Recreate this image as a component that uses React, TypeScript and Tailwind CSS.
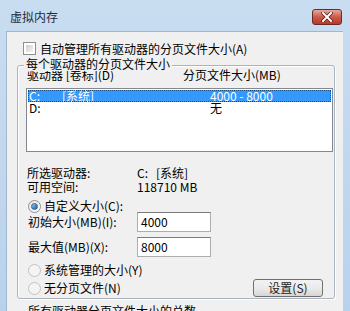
const FONT = "font-['Noto_Sans_CJK_SC','Noto_Sans',sans-serif]";

function CheckBox() {
    return (
        <span className="block w-[13px] h-[13px] border border-[#8f8f8f] bg-white p-[2px]">
            <span className="block w-full h-full bg-gradient-to-br from-[#cfcfcf] to-[#f4f4f4]" />
        </span>
    );
}

function Radio({ checked, dim }: { checked?: boolean; dim?: boolean }) {
    return (
        <span
            className={`flex items-center justify-center w-[13px] h-[13px] rounded-full border shrink-0 ${
                dim ? 'border-[#c2c2c2] bg-[#f4f4f4]' : 'border-[#8f8f8f] bg-gradient-to-br from-[#e6e6e6] to-white'
            }`}
        >
            {checked && (
                <span className="block w-[7px] h-[7px] rounded-full bg-gradient-to-br from-[#9fc8ec] to-[#1b5c9b] border border-[#2d5f8e]" />
            )}
        </span>
    );
}

function SizeRow({ label, value }: { label: string; value: string }) {
    return (
        <div className="flex items-center h-[20px]">
            <span className="w-[110px] pl-[1px] leading-[14px]">{label}</span>
            <div className="w-[74px] h-[20px] border border-[#abadb3] border-t-[#7a7a7a] bg-white pl-[3px] leading-[18px]">
                {value}
            </div>
        </div>
    );
}

export default function App() {
    return (
        <div className={`w-[350px] h-[311px] overflow-hidden bg-gradient-to-b from-[#c9ddf1] to-[#b9d2ec] text-[12px] text-black ${FONT}`}>
            {/* title bar */}
            <div className="flex items-center h-[31px]">
                <span className="pl-[10px] pt-[3px] leading-[14px] text-[#1e2b3a]">虚拟内存</span>
                <button className="ml-auto mr-[8px] mt-[3px] w-[30px] h-[16px] rounded-[3px] border border-[#6b2b25] bg-gradient-to-b from-[#e8a89c] via-[#c95a4c] to-[#b83a28] flex items-center justify-center">
                    <svg width="12" height="10" viewBox="0 0 12 10">
                        <path d="M2 1 L10 9 M10 1 L2 9" stroke="#5a1a14" strokeWidth="3.4" strokeLinecap="square" />
                        <path d="M2 1 L10 9 M10 1 L2 9" stroke="#ffffff" strokeWidth="2" strokeLinecap="square" />
                    </svg>
                </button>
            </div>

            {/* client area */}
            <div className="ml-[6px] w-[337px] h-[280px] bg-[#f0f0f0] border-l border-t border-[#a3b6ca]">
                <div className="flex items-center gap-[4px] ml-[16px] mt-[10px] h-[13px]">
                    <CheckBox />
                    <span className="leading-[14px]">自动管理所有驱动器的分页文件大小(A)</span>
                </div>

                {/* group box */}
                <div className="relative ml-[10px] mt-[10px] w-[318px] border border-[#aab4be] rounded-[3px] shadow-[inset_1px_1px_0_#ffffff,1px_1px_0_#ffffff] pl-[9px] pb-[1px]">
                    <span className="absolute left-[6px] -top-[9px] px-[2px] bg-[#f0f0f0] leading-[14px]">每个驱动器的分页文件大小</span>

                    <div className="flex mt-[3px] leading-[12px]">
                        <span className="w-[156px]">驱动器 [卷标](D)</span>
                        <span>分页文件大小(MB)</span>
                    </div>

                    <div className="ml-[-1px] mt-[7px] w-[307px] h-[64px] border border-[#828790] bg-white pt-[1px] px-[1px]">
                        <div className="flex h-[12px] leading-[12px] bg-[#3399ff] text-white outline-1 outline-dotted outline-[#1a4d80] outline-offset-[-1px]">
                            <span className="w-[34px] pl-[1px]">C:</span>
                            <span className="w-[148px]">[系统]</span>
                            <span>4000 - 8000</span>
                        </div>
                        <div className="flex h-[12px] leading-[12px]">
                            <span className="w-[182px] pl-[1px]">D:</span>
                            <span>无</span>
                        </div>
                    </div>

                    <div className="mt-[14px] leading-[14px]">
                        <div className="flex">
                            <span className="w-[110px]">所选驱动器:</span>
                            <span>C:&nbsp;&nbsp; [系统]</span>
                        </div>
                        <div className="flex">
                            <span className="w-[110px]">可用空间:</span>
                            <span>118710 MB</span>
                        </div>
                    </div>

                    <div className="flex items-center gap-[3px] mt-[6px] ml-[1px] h-[12px]">
                        <Radio checked />
                        <span className="leading-[14px]">自定义大小(C):</span>
                    </div>

                    <SizeRow label="初始大小(MB)(I):" value="4000" />
                    <div className="mt-[5px]">
                        <SizeRow label="最大值(MB)(X):" value="8000" />
                    </div>

                    <div className="flex items-center gap-[3px] mt-[6px] ml-[1px] h-[14px]">
                        <Radio dim />
                        <span className="leading-[14px]">系统管理的大小(Y)</span>
                    </div>

                    <div className="flex items-center mt-[2px] h-[18px]">
                        <div className="flex items-center gap-[3px] ml-[1px]">
                            <Radio dim />
                            <span className="leading-[14px]">无分页文件(N)</span>
                        </div>
                        <button className="ml-auto mr-[11px] w-[70px] h-[18px] rounded-[3px] border border-[#707070] bg-gradient-to-b from-[#f2f2f2] via-[#ebebeb] to-[#d6d6d6] leading-[14px] text-[#222]">
                            设置(S)
                        </button>
                    </div>
                </div>

                <div className="ml-[21px] mt-[5px] leading-[14px]">所有驱动器分页文件大小的总数</div>
            </div>
        </div>
    );
}
